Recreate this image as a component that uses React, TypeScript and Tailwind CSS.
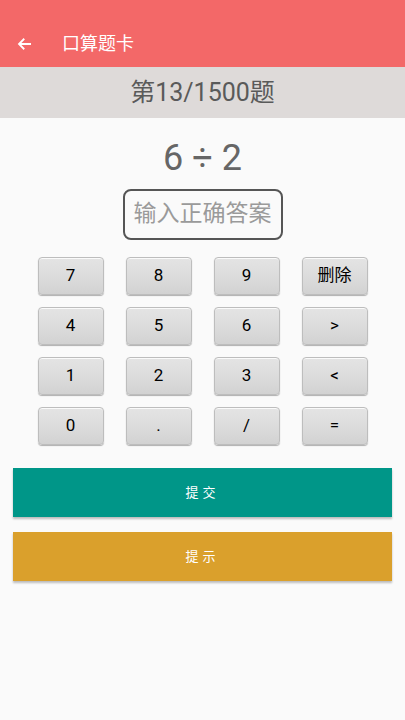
import React from 'react';

const keys = ['7', '8', '9', '删除', '4', '5', '6', '>', '1', '2', '3', '<', '0', '.', '/', '='];

const Key: React.FC<{ label: string }> = ({ label }) => (
  <button className="relative h-[38px] w-[66px] rounded-[4px] border border-[#bdbdbd] bg-gradient-to-b from-[#e4e4e4] via-[#dcdcdc] to-[#d2d2d2] text-[17px] text-black shadow-[0_1px_1px_rgba(0,0,0,0.3),inset_0_1px_0_rgba(255,255,255,0.8)]">
    {label}
  </button>
);

export default function App() {
  return (
    <div
      className="flex h-[720px] w-[405px] flex-col bg-[#fafafa]"
      style={{ fontFamily: 'Roboto, "Noto Sans CJK SC", sans-serif' }}
    >
      {/* header */}
      <div className="flex h-[67px] items-end bg-[#f36868] pb-[12px] shadow-[0_2px_3px_rgba(0,0,0,0.25)]">
        <svg className="mb-[2px] ml-[16px] h-[18px] w-[18px]" viewBox="0 0 24 24" fill="none" stroke="white" strokeWidth="2.4">
          <path d="M20 12H5M11 5l-7 7 7 7" />
        </svg>
        <span className="ml-[28px] text-[18px] leading-[22px] text-white">口算题卡</span>
      </div>

      <div className="flex h-[51px] items-center justify-center bg-[#dedad9] text-[25px] text-[#5a5a5a]">
        第13/1500题
      </div>

      <div className="mt-[19px] text-center text-[36px] leading-[42px] text-[#666]">6 ÷ 2</div>

      <div className="mt-[10px] flex justify-center">
        <div className="flex h-[51px] w-[160px] items-center justify-center rounded-[8px] border-2 border-[#555] text-[23px] text-[#9a9a9a]">
          输入正确答案
        </div>
      </div>

      <div className="mt-[17px] grid grid-cols-[repeat(4,66px)] justify-center gap-x-[22px] gap-y-[12px]">
        {keys.map((k) => (
          <Key key={k} label={k} />
        ))}
      </div>

      <div className="mt-[23px] flex flex-col gap-[15px] px-[13px]">
        <button className="h-[49px] bg-[#009688] text-[13px] tracking-[4px] text-white shadow-[0_2px_2px_rgba(0,0,0,0.25)]">
          提交
        </button>
        <button className="h-[49px] bg-[#daa02c] text-[13px] tracking-[4px] text-white shadow-[0_2px_2px_rgba(0,0,0,0.25)]">
          提示
        </button>
      </div>
    </div>
  );
}
